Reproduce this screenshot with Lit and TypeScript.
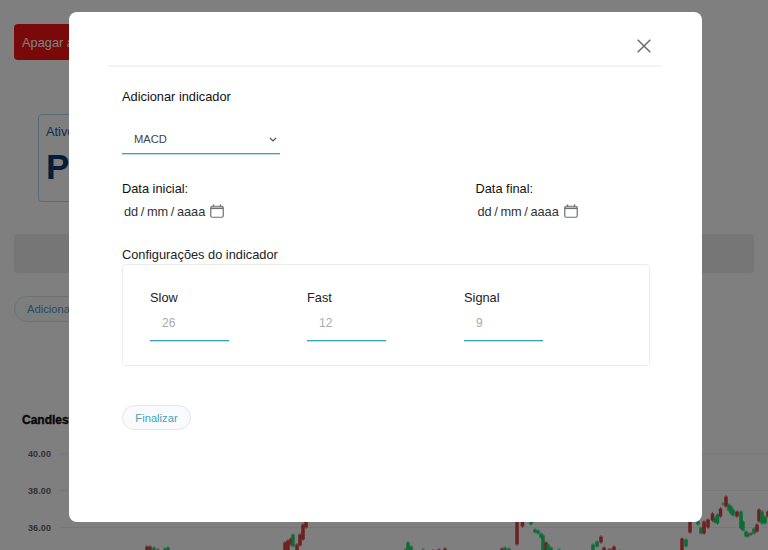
import { LitElement, html, css, svg } from "lit";
import { customElement } from "lit/decorators.js";

// x, wick top, wick bottom, up?
const candles: [number, number, number, boolean][] = [
  [147, 545, 552, false], [150, 545, 552, false], [154, 546, 552, true], [158, 548, 552, false], [165, 547, 552, true], [168, 546, 552, true],
  [285, 541, 552, false], [288, 539, 552, false], [291, 537, 546, false], [293, 533, 548, true], [297, 543, 552, false],
  [300, 533, 547, false], [303, 523, 541, false], [306, 520, 529, false],
  [406, 548, 552, false], [408, 541, 552, true], [411, 545, 552, true], [423, 548, 552, true], [433, 549, 552, false], [439, 548, 552, false], [445, 547, 552, false],
  [502, 547, 552, false], [505, 546, 552, true], [509, 547, 552, true],
  [517, 520, 546, false], [522.5, 520, 528, false], [531, 520, 526, true], [535, 528, 534, true], [538, 529, 535, true], [541, 532, 539, true],
  [543, 534, 552, true], [546, 541, 552, false], [548, 543, 552, true], [551, 546, 552, true], [559, 548, 552, true],
  [593, 543, 552, true], [597, 540, 548, true], [601, 535, 544, false], [604, 546, 552, false], [609, 548, 552, false], [611, 548, 552, false], [614, 545, 552, false], [620, 549, 552, true],
  [682, 537, 552, false], [686, 538, 548, true], [690, 520, 534, false], [698, 520, 526, true], [701, 526, 535, true], [704, 520, 535, false],
  [708, 518, 529, false], [712.5, 512, 522, false], [715, 516, 524, true], [717.5, 513, 525, true], [720.5, 507, 518, false], [723, 502, 506, true], [726, 495, 508, false],
  [729, 503, 512, true], [731, 505, 515, true], [733, 508, 517, true], [737, 510, 518, false], [741, 510, 530, true], [743, 520, 532, true],
  [746, 530, 538, true], [748, 532, 538, true], [751, 532, 536, false], [754, 527, 535, true], [757, 523, 533, false], [759, 508, 523, false],
  [762, 510, 525, true], [765, 515, 525, true], [768, 510, 518, false],
];

@customElement("app-root")
export class AppRoot extends LitElement {
  static styles = css`
    :host {
      display: block;
      position: relative;
      width: 768px;
      height: 550px;
      overflow: hidden;
      background: #fff;
      font-family: "Liberation Sans", Arial, sans-serif;
      font-size: 12.8px;
      color: #212529;
    }
    .page {
      position: relative;
      height: 550px;
      padding: 24px 14px 0;
      box-sizing: border-box;
      display: flex;
      flex-direction: column;
      align-items: flex-start;
    }
    .danger {
      height: 36px;
      width: 120px;
      border-radius: 4px;
      background: #f51515;
      color: #fff;
      font-size: 12.8px;
      padding-left: 8px;
      display: flex;
      align-items: center;
      box-sizing: border-box;
    }
    .asset {
      margin: 54px 0 0 24px;
      width: 120px;
      height: 88px;
      border: 1px solid #b5d4f0;
      border-radius: 4px;
      box-sizing: border-box;
      padding: 9px 7px;
      overflow: hidden;
    }
    .asset-label { color: #1d5fa8; font-size: 12.8px; line-height: 16px; }
    .asset-code { color: #0b3b73; font-size: 35px; font-weight: 700; line-height: 42px; margin-top: 6px; }
    .band {
      margin-top: 32px;
      align-self: stretch;
      height: 39px;
      background: #ececec;
      border-radius: 4px;
    }
    .add {
      margin-top: 23px;
      width: 120px;
      height: 26px;
      box-sizing: border-box;
      border: 1px solid #dde3e6;
      border-radius: 13px;
      background: #f8fafb;
      color: #4a9fc0;
      font-size: 11.2px;
      padding-left: 12px;
      display: flex;
      align-items: center;
    }
    .chart-title {
      margin: 91px 0 0 8px;
      font-weight: 700;
      font-size: 12px;
      -webkit-text-stroke: 0.4px #111;
      color: #111;
    }
    .chart { position: absolute; inset: 0; }
    .tick { font-size: 9px; font-weight: 700; fill: #666; letter-spacing: 0.1px; }
    .overlay {
      position: absolute;
      inset: 0;
      background: rgba(0, 0, 0, 0.5);
    }
    .modal {
      position: absolute;
      left: 69px;
      top: 12px;
      width: 633px;
      height: 510px;
      background: #fff;
      border-radius: 8px;
      box-sizing: border-box;
      padding: 0 40px;
      display: flex;
      flex-direction: column;
    }
    .head {
      height: 55px;
      flex: none;
      border-bottom: 2px solid #f2f3f4;
      box-sizing: border-box;
      display: flex;
      justify-content: flex-end;
      align-items: center;
      padding: 14px 11.5px 0 0;
    }
    .close { display: block; width: 14px; height: 14px; }
    .body { padding: 0 12px 0 13px; display: flex; flex-direction: column; align-items: flex-start; }
    .title { margin-top: 22px; line-height: 16px; font-size: 12.8px; color: #111; }
    .select {
      margin-top: 18px;
      width: 158px;
      height: 31px;
      box-sizing: border-box;
      border-bottom: 1px solid #38a3bf;
      box-shadow: 0 1px 0 rgba(56, 163, 191, 0.35);
      display: flex;
      align-items: center;
      justify-content: space-between;
      padding: 1px 3px 0 12px;
      font-size: 11.2px;
      color: #444;
    }
    .chev { display: block; width: 8px; height: 5px; margin-top: 2px; }
    .dates { align-self: stretch; display: flex; margin-top: 27px; }
    .date { width: 353.5px; flex: none; }
    .date-label { font-size: 12.8px; line-height: 16px; color: #111; }
    .date-value {
      margin-top: 6px;
      height: 16px;
      display: flex;
      align-items: center;
      padding-left: 2px;
      font-size: 12.8px;
      color: #333;
      gap: 5px;
    }
    .date-sep { word-spacing: -1px; }
    .cal { display: block; width: 14px; height: 14px; margin-top: -1px; }
    .cfg-title { margin-top: 28px; font-size: 12.8px; line-height: 16px; color: #222; }
    .cfg {
      margin-top: 1px;
      align-self: stretch;
      height: 102px;
      box-sizing: border-box;
      border: 1px solid #ececec;
      border-radius: 4px;
      padding: 25px 27px 0;
      display: flex;
    }
    .field { width: 157px; flex: none; }
    .field-label { font-size: 12.8px; line-height: 16px; color: #222; }
    .field-input {
      margin-top: 2px;
      width: 79px;
      height: 33px;
      box-sizing: border-box;
      border-bottom: 1px solid #38a3bf;
      box-shadow: 0 1px 0 rgba(56, 163, 191, 0.35);
      font-size: 12px;
      color: #aaa;
      padding: 0 0 3px 12px;
      display: flex;
      align-items: center;
    }
    .finish {
      margin-top: 39px;
      width: 69px;
      height: 25px;
      box-sizing: border-box;
      border: 1px solid #e3e6e8;
      border-radius: 13px;
      background: #f8fafb;
      color: #4a9fc0;
      font-size: 11.2px;
      display: flex;
      align-items: center;
      justify-content: center;
    }
  `;

  private dateField(label: string) {
    return html`<div class="date">
      <div class="date-label">${label}</div>
      <div class="date-value">
        <span class="date-sep">dd / mm / aaaa</span>
        <svg class="cal" viewBox="0 0 14 14" fill="none" stroke="#6b6f72">
          <rect x="0.75" y="2.25" width="12.5" height="11" rx="1.5" stroke-width="1.2"></rect>
          <path d="M1 3.5h12v1.6H1z" fill="#6b6f72" stroke="none"></path>
          <path d="M3.5 .5v2M10.5 .5v2" stroke-width="1.4"></path>
        </svg>
      </div>
    </div>`;
  }

  render() {
    const ticks: [string, number][] = [["40.00", 454], ["38.00", 490.5], ["36.00", 527.5]];
    const fields: [string, string][] = [["Slow", "26"], ["Fast", "12"], ["Signal", "9"]];
    return html`
      <div class="page">
        <div class="danger">Apagar ativo</div>
        <div class="asset">
          <div class="asset-label">Ativo</div>
          <div class="asset-code">PE</div>
        </div>
        <div class="band"></div>
        <div class="add">Adicionar</div>
        <div class="chart-title">Candlesticks</div>
        <svg class="chart" width="768" height="550" viewBox="0 0 768 550">
          ${ticks.map(([t, y]) => svg`
            <line x1="59" x2="768" y1=${y} y2=${y} stroke="#eeeeee"></line>
            <text class="tick" x="51" y=${y + 3} text-anchor="end">${t}</text>`)}
          ${candles.map(([x, a, b, up]) => {
            const col = up ? "#18d870" : "#d84040";
            return svg`
              <line x1=${x} x2=${x} y1=${a} y2=${b} stroke=${col} stroke-opacity="0.7"></line>
              <rect x=${x - 1.75} y=${a + 1.5} width="3.5" height=${b - a - 3} fill=${col}></rect>`;
          })}
        </svg>
      </div>
      <div class="overlay"></div>
      <div class="modal">
        <div class="head">
          <svg class="close" viewBox="0 0 14 14" stroke="#6c6c6c" stroke-width="1.5">
            <path d="M.7 .7l12.6 12.6M13.3 .7L.7 13.3"></path>
          </svg>
        </div>
        <div class="body">
          <div class="title">Adicionar indicador</div>
          <div class="select">
            <span>MACD</span>
            <svg class="chev" viewBox="0 0 8 5" fill="none" stroke="#555" stroke-width="1.2">
              <path d="M1 1l3 3 3-3"></path>
            </svg>
          </div>
          <div class="dates">
            ${this.dateField("Data inicial:")}
            ${this.dateField("Data final:")}
          </div>
          <div class="cfg-title">Configurações do indicador</div>
          <div class="cfg">
            ${fields.map(([l, v]) => html`<div class="field">
              <div class="field-label">${l}</div>
              <div class="field-input">${v}</div>
            </div>`)}
          </div>
          <div class="finish">Finalizar</div>
        </div>
      </div>
    `;
  }
}
